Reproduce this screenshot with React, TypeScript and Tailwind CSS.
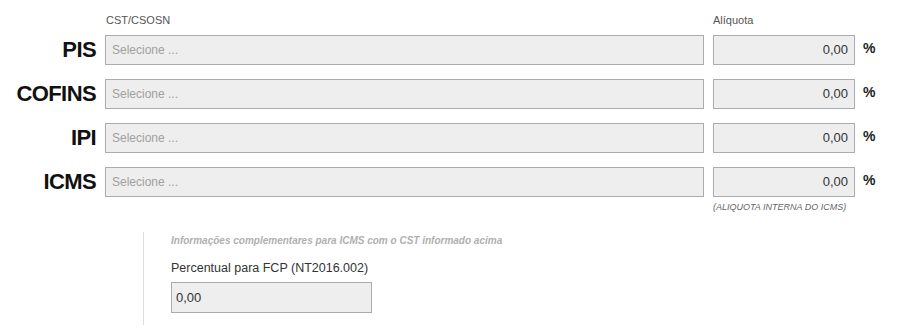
const taxes = ['PIS', 'COFINS', 'IPI', 'ICMS']

function TaxRow({ name }: { name: string }) {
  return (
    <div className="flex items-center">
      <div className="w-[96px] text-right text-[22px] font-bold leading-none tracking-[-0.6px] text-[#111]">
        {name}
      </div>
      <div className="ml-[9px] flex h-[30px] w-[599px] items-center border border-[#a9acad] bg-[#eeeeee] pl-[6px] text-[12px] text-[#a0a0a0]">
        Selecione ...
      </div>
      <div className="ml-[9px] flex h-[30px] w-[142px] items-center justify-end border border-[#a9acad] bg-[#eeeeee] pr-[6px] text-[13px] text-[#333]">
        0,00
      </div>
      <div className="ml-[8px] -mt-[3px] text-[14px] font-bold text-[#222]">%</div>
    </div>
  )
}

export default function App() {
  return (
    <div className="h-[335px] w-[903px] bg-white font-['Liberation_Sans',Arial,sans-serif]">
      {/* Cabeçalho */}
      <div className="flex pt-[13px] pb-[8px] text-[11px] leading-[14px] text-[#555]">
        <div className="ml-[106px] w-[607px]">CST/CSOSN</div>
        <div>Alíquota</div>
      </div>

      <div className="flex flex-col gap-[14px]">
        {taxes.map((t) => (
          <TaxRow key={t} name={t} />
        ))}
      </div>

      <div className="ml-[713px] mt-[5px] text-[9px] italic leading-[11px] text-[#666]">
        (ALIQUOTA INTERNA DO ICMS)
      </div>

      {/* Informações complementares */}
      <div className="ml-[143px] mt-[19px] h-[93px] border-l border-[#dddddd] pl-[27px] pt-[3px]">
        <div className="text-[10px] font-bold italic leading-[12px] text-[#b0b0b0]">
          Informações complementares para ICMS com o CST informado acima
        </div>
        <div className="mt-[14px] text-[12.5px] leading-[15px] text-[#333]">
          Percentual para FCP (NT2016.002)
        </div>
        <div className="mt-[6px] flex h-[31px] w-[201px] items-center border border-[#a9acad] bg-[#eeeeee] pl-[4px] text-[13px] text-[#333]">
          0,00
        </div>
      </div>
    </div>
  )
}
